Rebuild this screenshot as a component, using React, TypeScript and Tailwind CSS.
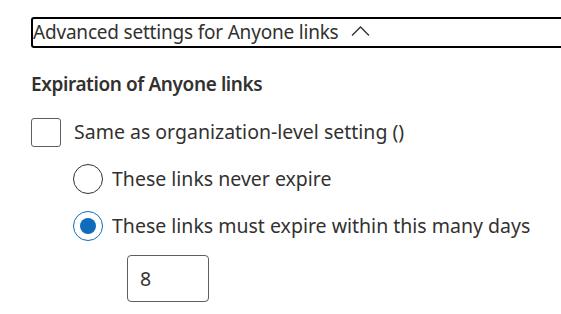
import { useState } from "react";

function Chevron() {
  return (
    <svg width="19" height="10" viewBox="0 0 19 10" fill="none" className="ml-[12px] mt-[-4px]">
      <path d="M1 9.5L9.5 1L18 9.5" stroke="#323130" strokeWidth="1.3" />
    </svg>
  );
}

function Radio({ checked, label }: { checked: boolean; label: string }) {
  return (
    <label className="flex h-[30px] items-center gap-[9px]">
      <span
        className={
          checked
            ? "flex h-[30px] w-[30px] items-center justify-center rounded-full border-[1.5px] border-[#0f6cbd]"
            : "flex h-[30px] w-[30px] items-center justify-center rounded-full border-[1.5px] border-[#323130]"
        }
      >
        {checked && <span className="h-[16px] w-[16px] rounded-full bg-[#0f6cbd]" />}
      </span>
      <span>{label}</span>
    </label>
  );
}

export default function App() {
  const [days] = useState("8");
  return (
    <div className="h-[314px] w-[561px] overflow-hidden bg-white pl-[31px] pt-[17px] font-['Noto_Sans',sans-serif] text-[19.5px] text-[#323130]">
      <button className="flex h-[31px] w-[560px] items-center rounded-[3px] border-2 border-black text-left text-[19px] leading-none tracking-[-0.2px]">
        <span>Advanced settings for Anyone links</span>
        <Chevron />
      </button>
      <h3 className="mt-[22px] text-[19px] font-semibold leading-[28px] tracking-[-0.4px]">
        Expiration of Anyone links
      </h3>
      <div className="mt-[19px] flex h-[30px] items-center gap-[13px]">
        <span className="h-[29px] w-[30px] rounded-[3px] border-[1.5px] border-[#605e5c]" />
        <span>Same as organization-level setting ()</span>
      </div>
      <div className="ml-[42px] mt-[17px] flex flex-col gap-[17px]">
        <Radio checked={false} label="These links never expire" />
        <Radio checked label="These links must expire within this many days" />
        <div className="ml-[54px] mt-[-3px] flex h-[47px] w-[82px] items-center rounded-[4px] border border-[#605e5c] px-[12px]">
          {days}
        </div>
      </div>
    </div>
  );
}
